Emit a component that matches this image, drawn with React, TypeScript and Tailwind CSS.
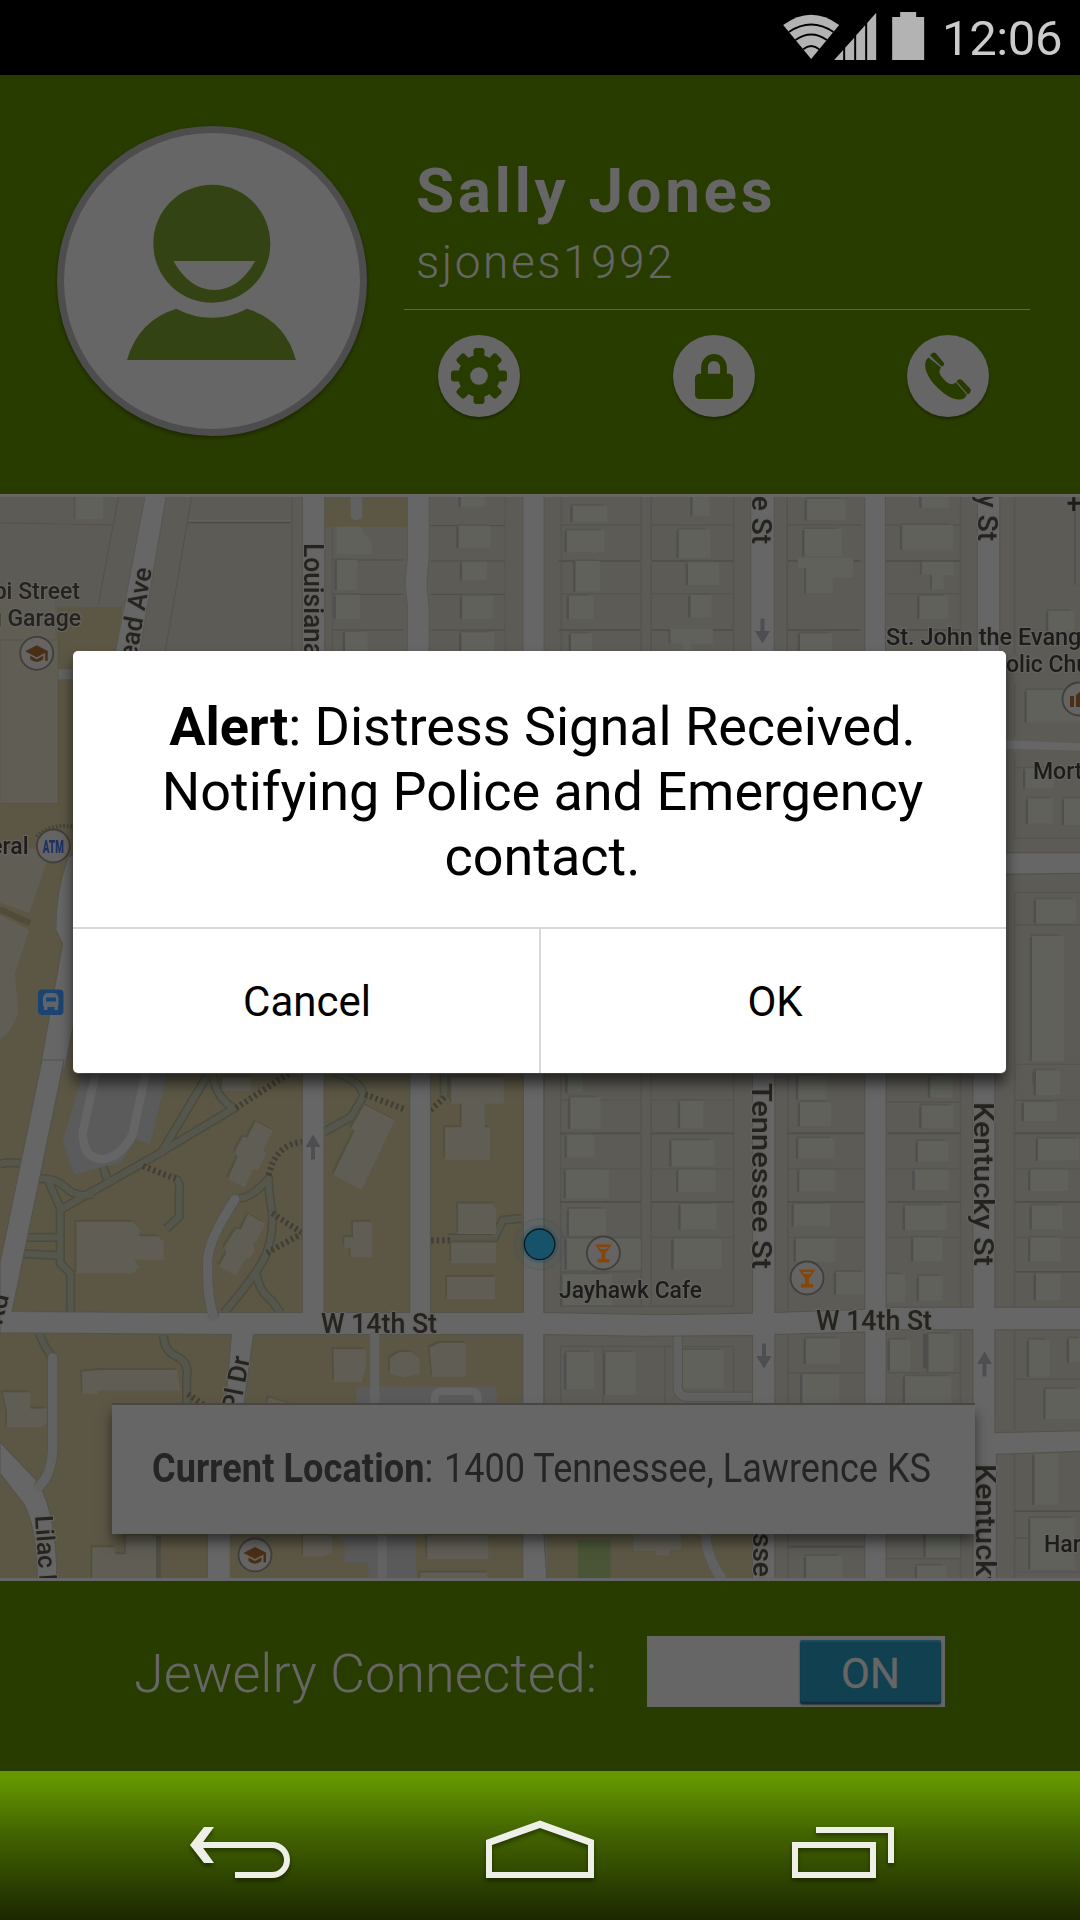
import React from "react";
import { FaLock } from "react-icons/fa";

type Box = [number, number, number, number];

const LAND = "#5d5b56";
const CAMPUS = "#5c5745";
const ROAD = "#666666";
const EDGE = "#54524b";
const HOUSE = "#5f615a";
const HALL = "#605d55";
const LOT = "#565450";

const FOOTPATHS = [
  "M605 40L465 275M618 40Q625 110 680 140L430 290L175 435M0 302Q25 295 60 300M110 345Q160 340 190 370T270 390M140 350L175 430V590L205 620V740M75 515H175M65 562L175 568M300 310L310 345M505 345Q525 345 520 390V455L483 490",
  "M695 402Q730 400 780 345Q780 390 790 440Q795 510 770 570Q740 630 650 735M745 620Q750 670 790 700L815 735M970 35Q1050 60 1055 105L1020 165L940 210M1290 35V110M1300 517H1435L1460 465L1515 460",
  "M115 795Q130 840 155 865M475 800Q475 845 515 862Q550 880 542 920V1000",
];

function Houses({ items }: { items: Box[] }) {
  return (
    <>
      {items.map(([x, y, w, h], i) => (
        <g key={i}>
          <rect x={x - 7} y={y + 3} width={8} height={h - 3} fill="#4f4f4e" />
          <rect x={x - 5} y={y - 5} width={w - 8} height={6} fill="#55544f" />
          <rect x={x} y={y} width={w} height={h} fill={HOUSE} />
        </g>
      ))}
    </>
  );
}

function Label({
  x,
  y,
  size = 24,
  length,
  rotate = 0,
  anchor = "start",
  color = "#252320",
  children,
}: {
  x: number;
  y: number;
  size?: number;
  length?: number;
  rotate?: number;
  anchor?: "start" | "end";
  color?: string;
  children: string;
}) {
  const placement = `translate(${x} ${y}) rotate(${rotate})`;
  return (
    <text
      transform={placement}
      fontSize={size}
      fontWeight={500}
      textAnchor={anchor}
      textLength={length}
      lengthAdjust="spacingAndGlyphs"
      fill={color}
      stroke="#64635f"
      strokeWidth={2.5}
      strokeLinejoin="round"
      paintOrder="stroke"
    >
      {children}
    </text>
  );
}

function Pin({ x, y, children }: { x: number; y: number; children: React.ReactNode }) {
  return (
    <g transform={`translate(${x} ${y})`}>
      <circle r={16.5} fill="#656462" stroke="#403f3b" strokeWidth={1.8} />
      {children}
    </g>
  );
}

function Cocktail() {
  return <path d="M-8.500 -8.500H8.500L2 0.500V6H6V9.500H-6V6H-2V0.500ZM-4.500 -6L-3 -4H3L4.500 -6Z" fill="#86460a" fillRule="evenodd" />;
}

function GradCap() {
  return (
    <g fill="#4a2f17">
      <path d="M-11.500 -2L0 -8L11.500 -2L0 4Z" />
      <path d="M-6.500 2.500L0 6L6.500 2.500V6Q0 11.500 -6.500 6Z" />
      <path d="M8.500 -2H11V7.500H8.500Z" />
    </g>
  );
}

function Arrow({ x, y, down = false }: { x: number; y: number; down?: boolean }) {
  return (
    <path
      transform={`translate(${x} ${y}) rotate(${down ? 180 : 0})`}
      d="M0 -12.5L7.5 0H2V12.5H-2V0H-7.5Z"
      fill="#4c4e52"
    />
  );
}

function MapNorthWest() {
  return (
    <g transform="translate(0 485) scale(0.34439 0.33333)">
      <path d="M165 365H355L335 520H165Z" fill={CAMPUS} />
      <path d="M0 345H160V520H0Z" fill={HALL} />
      <path d="M215 30V103M0 113L330 120M345 30L285 360M557 30L480 500M848 30V510" stroke={EDGE} strokeWidth={3} fill="none" />
      <path d="M548 113H845" stroke="#4b4a46" strokeWidth={4} />
      <path d="M548 106H845" stroke="#62605a" strokeWidth={5} />
      <rect x={222} y={30} width={78} height={73} fill={HOUSE} />
      <path d="M422 30H483L402 520H332Z" fill={ROAD} stroke={EDGE} strokeWidth={2} />
      <path d="M945 30H1182V127H945Z" fill={CAMPUS} />
      <path d="M1018 30H1052V92Q1050 105 1035 105Q1020 105 1018 92Z" fill="#616161" />
      <path d="M965 225H1170M965 328H1170M965 435H1170M1250 122H1467M1250 228H1467M1250 328H1467M1250 435H1467" stroke="#4f4e49" strokeWidth={3.5} />
      <path d="M965 127V510M1467 30V510" stroke={LOT} strokeWidth={3} />
      <Houses items={[[978, 225, 60, 90], [975, 330, 70, 72], [1002, 440, 66, 80], [1338, 30, 72, 35], [1332, 122, 93, 66], [1342, 230, 72, 56], [1342, 332, 90, 70], [1340, 442, 95, 80]]} />
      <path d="M978 125H1050V138L1080 170V208H978Z" fill={HOUSE} />
      <rect x={879} y={30} width={63} height={500} fill={ROAD} />
      <path d="M1183 30H1246V210L1239 295L1246 370V520H1183V360L1176 295L1183 220Z" fill={ROAD} stroke={EDGE} strokeWidth={2} />
      <path d="M878 30V510M943 30V510M1519 30V510" stroke={EDGE} strokeWidth={2.5} />
      <rect x={1520} y={30} width={60} height={500} fill={ROAD} />
    </g>
  );
}

function MapNorthEast() {
  return (
    <g transform="translate(540 485) scale(0.34439 0.33333)">
      <path d="M60 120H293M325 120H560M718 120H935M1003 120H1220M60 326H293M325 326H560M1003 326H1220" stroke={LOT} strokeWidth={4} />
      <path d="M55 228H293M325 228H560M718 228H930M1003 228H1220M55 435H293M325 435H560M718 435H930M1003 435H1220" stroke="#4e4d49" strokeWidth={4} />
      <path d="M62 30V510M294 30V510M323 30V510M562 30V510M718 30V510M1221 30V510M1378 30V510" stroke={LOT} strokeWidth={4} />
      <Houses items={[[95, 62, 100, 48], [78, 136, 110, 66], [103, 228, 72, 92], [84, 332, 72, 70], [90, 445, 62, 70], [443, 30, 50, 62], [403, 133, 92, 86], [430, 232, 90, 68], [437, 330, 62, 68], [775, 42, 112, 64], [768, 132, 108, 82], [755, 445, 94, 70], [1108, 30, 80, 38], [1052, 120, 148, 74], [1102, 332, 84, 70], [1476, 378, 76, 60]]} />
      <path d="M748 218H910V278H850V325H770V248H748ZM1108 230H1202V270H1172V312H1137V268H1108ZM376 432H502V478H440V510H415V475H376Z" fill={HOUSE} />
      <path d="M770 250V325M1106 232V268M1135 270V312M376 435V475" stroke="#51514f" strokeWidth={6} />
      <path d="M612 20H680V520H612ZM943 20H1003V520H943ZM1270 20H1335V520H1270Z" fill={ROAD} stroke={EDGE} strokeWidth={2.5} />
      <rect x={-5} y={20} width={16} height={510} fill={ROAD} />
      <path d="M12 20V520" stroke={EDGE} strokeWidth={2.5} />
      <path d="M1553 80V300" stroke="#4f5054" strokeWidth={5} />
      <path d="M1532 55H1568M1550 37V78" stroke="#1d1b1b" strokeWidth={9} />
    </g>
  );
}

function MapWest() {
  return (
    <g transform="translate(0 640) scale(0.33333)">
      <rect x={0} y={0} width={280} height={1320} fill={CAMPUS} />
      <path d="M0 0H175V490H0Z" fill={HALL} stroke="#55523f" strokeWidth={2} />
      <path d="M175 88H280V118H175Z" fill="#626262" />
      <path d="M0 625H155L88 818L0 788Z" fill={HALL} />
      <path d="M0 825L88 870L45 1000L55 1120L30 1170L0 1200Z" fill={HALL} />
      <path d="M0 808L90 850" stroke="#504c39" strokeWidth={18} />
      <path d="M205 650Q165 760 168 870L188 912L112 1330H185L235 1080V640Z" fill={ROAD} stroke={EDGE} strokeWidth={3} />
      <path d="M110 590Q150 550 220 560" stroke="#45433a" strokeWidth={12} strokeDasharray="5 6" fill="none" />
    </g>
  );
}

function MapEast() {
  return (
    <g transform="translate(1000 640) scale(0.33333)">
      <path d="M0 300L250 310V332L0 326Z" fill={ROAD} />
      <path d="M44 130V290M44 340V595H250M44 383H90M44 757V1320M44 757H250M44 855H250M44 1273H250" stroke={LOT} strokeWidth={4} fill="none" />
      <path d="M0 638H250V700L0 703Z" fill={ROAD} stroke={EDGE} strokeWidth={4} />
      <Houses items={[[80, 150, 180, 98], [76, 385, 85, 60], [84, 475, 76, 76], [192, 475, 60, 80], [108, 778, 120, 72], [96, 888, 96, 375], [104, 1292, 76, 40]]} />
    </g>
  );
}

function MapSouthWest() {
  return (
    <g transform="translate(0 1060) scale(0.34439)">
      <rect x={0} y={20} width={1520} height={1490} fill={CAMPUS} />
      <path d="M245 20H490L435 245L395 230L350 300L215 332L182 235Z" fill="#5b5b5b" />
      <path d="M280 30L240 210Q240 285 295 288Q350 285 385 215L425 30" fill="none" stroke="#656565" strokeWidth={25} />
      <g fill="none" stroke="#4d4b3e" strokeWidth={27} strokeLinejoin="round">
        {FOOTPATHS.map((d) => <path key={d} d={d} />)}
      </g>
      <g fill="none" stroke="#56574c" strokeWidth={18} strokeLinejoin="round">
        {FOOTPATHS.map((d) => <path key={d} d={d} />)}
      </g>
      <g fill="none" stroke="#403e36" strokeWidth={18} strokeDasharray="7 9">
        <path d="M685 140L840 38M780 335Q800 245 878 238M415 308L510 345M790 445L875 500M775 560L875 505M1060 100L1180 145M1250 145L1295 105M1252 524H1310M545 970L590 1000" />
      </g>
      <g fill={HALL} className="drop-shadow-[-5px_-6px_0_#524f3f]">
        <path d="M222 470H385L405 490V512H460L475 528V580H390L405 600L385 620H222Z" />
        <path d="M742 178L792 205L765 262L775 270L748 320L735 318L710 370L662 345L690 280L680 270L705 222L718 225Z" />
        <path d="M720 447L770 475L745 525L735 530L740 555L725 575L710 580L685 627L636 598L658 560L650 545L685 490L700 492Z" />
        <path d="M1058 130L1147 175L1050 377L967 333L1030 205L1018 200Z" />
        <path d="M1025 470H1080V573H1018V545H1000V515H1025ZM1310 50H1463V127H1408V195H1423V290H1292V195H1340V127H1310ZM1330 417H1430L1440 430V505H1330ZM1310 530H1440V590H1310ZM1298 630H1438V695H1298Z" />
        <path d="M968 840H1062V895L1050 935H970ZM1132 865L1160 848H1195L1218 865V910L1175 922L1132 910ZM1248 835L1275 822H1352V920H1255ZM238 905L290 900H515V920L525 960H283V970H240Z" />
        <path d="M8 965H88V1012H135V1055L118 1067H20V1020ZM268 1415H335V1435H365V1380H460V1510H268ZM880 1380H965V1430L940 1442H880ZM1240 1380H1418V1450H1240ZM1220 1488H1415V1510H1220ZM780 980L850 1000H775ZM645 50H730V90H645Z" />
      </g>
      <path d="M460 1380V1510" stroke="#4e4e43" strokeWidth={14} />
      <path d="M1035 948H1442V1010H1035ZM985 1380H1208V1510H1070V1460H1000V1400Z" fill="#5a5a5a" />
      <path d="M1262 1005V985Q1262 962 1285 962H1365Q1388 962 1388 985V1005" fill="none" stroke="#656565" strokeWidth={22} />
      <g fill={ROAD} stroke={EDGE} strokeWidth={3}>
        <path d="M122 0H186L35 730L500 733H878V20H941V733H1190V20H1250V733H1520V20H1580V1510H1518V797H736L708 1000V1510H602V1380L655 1000L672 797L0 792V590Z" />
        <path d="M0 1110L110 1225Q165 1320 165 1510H108Q110 1370 70 1290L0 1200Z" />
      </g>
      <g fill="none" strokeLinecap="round">
        <path d="M682 405Q600 530 603 590Q600 680 620 740M153 865V1110Q155 1200 115 1235" stroke={EDGE} strokeWidth={32} />
        <path d="M682 405Q600 530 603 590Q600 680 620 745M153 865V1110Q155 1200 112 1240" stroke="#626262" strokeWidth={27} />
      </g>
      <path d="M1088 790V1000M1110 1380V1510" stroke="#626262" strokeWidth={27} />
      <path d="M667 1376H790V1510H667Z" fill={CAMPUS} />
    </g>
  );
}

function MapSouthEast() {
  return (
    <g transform="translate(540 1060) scale(0.34439)">
      <path d="M60 30V715H562V30M294 30V715M323 30V715M720 30V725M1221 30V715M1378 30V720M60 1000V832H562V1000M183 832V1000M362 832V1000M720 795V1000M1221 790V1000M1378 785V1075M1378 1145V1510M720 1376V1510M1221 1376V1510" stroke={LOT} strokeWidth={4} fill="none" />
      <path d="M60 117H293M323 117H562M1010 122H1221M1378 117H1568M60 317H293M323 317H562M720 317H940M1010 317H1221M1378 317H1568M60 515H293M323 515H562M720 515H940M1010 515H1221M1378 515H1568M60 615H293M720 908H940M1010 908H1221M1378 927H1568M1005 1448H1221M1378 1388H1568M1378 1487H1568" stroke={LOT} strokeWidth={4} />
      <path d="M60 213H293M323 213H562M720 213H940M1010 213H1221M1378 213H1568M60 412H293M323 412H562M720 412H940M1010 412H1221M1378 412H1568M1378 615H1568M1378 1310H1568M720 1413H940" stroke="#4e4d48" strokeWidth={4.5} />
      <Houses
        items={[
          [80, 40, 45, 55], [88, 108, 88, 92], [78, 217, 80, 66], [75, 318, 125, 84], [84, 432, 108, 78], [78, 518, 215, 90], [65, 622, 145, 90],
          [407, 118, 68, 80], [382, 233, 125, 75], [402, 318, 108, 66], [408, 418, 105, 74], [388, 518, 140, 90],
          [750, 45, 82, 70], [755, 122, 90, 70], [750, 227, 105, 60], [753, 318, 105, 64], [737, 418, 105, 65], [743, 518, 115, 68], [860, 615, 88, 66],
          [1133, 45, 65, 65], [1108, 132, 92, 66], [1097, 235, 90, 60], [1088, 318, 100, 60], [1060, 422, 120, 72], [1084, 515, 84, 70], [1003, 622, 58, 82], [1100, 627, 70, 72],
          [1440, 30, 70, 72], [1405, 122, 96, 56], [1446, 228, 120, 64], [1424, 318, 110, 62], [1428, 422, 90, 70], [1424, 515, 88, 70], [1440, 620, 72, 78],
          [77, 848, 80, 108], [190, 848, 88, 125], [414, 842, 120, 112], [772, 808, 100, 74], [762, 912, 108, 88],
          [1016, 812, 60, 90], [1128, 795, 74, 110], [1060, 918, 135, 82], [1420, 812, 60, 108], [1536, 808, 40, 70],
          [1468, 955, 100, 88], [1436, 1142, 70, 150], [1424, 1330, 130, 150], [773, 1440, 105, 70], [1120, 1376, 100, 68], [1095, 1468, 85, 42],
        ]}
      />
      <path d="M1118 795V895" stroke="#4d4d4c" strokeWidth={12} />
      <path d="M20 1376H617V1510H20Z" fill={CAMPUS} />
      <path d="M110 1395H205V1510H110Z" fill="#4a5537" />
      <path d="M272 1376H410V1422H375V1438H335V1425H272Z" fill={HALL} />
      <path d="M482 1376Q480 1440 530 1510" fill="none" stroke="#616161" strokeWidth={28} />
      <path d="M400 790V950Q402 978 430 978H620" fill="none" stroke={EDGE} strokeWidth={29} />
      <path d="M400 790V950Q402 978 430 978H620" fill="none" stroke="#616161" strokeWidth={24} />
      <path
        d="M0 20H11V733L350 740L617 735V20H682V733L943 724V20H1005V718H1257V20H1321V718H1580V783H1321V1082L1580 1076V1136L1325 1145V1510H1257V783H1005V1510H943V790L682 797V1510H617V800L300 802L11 797V1376L20 1510H0Z"
        fill={ROAD}
        stroke={EDGE}
        strokeWidth={3}
      />
    </g>
  );
}

function CityMap() {
  return (
    <svg viewBox="0 497 1080 1081" className="block h-[1081px] w-full blur-[0.6px]" fontFamily="Roboto, sans-serif">
      <rect x={0} y={497} width={1080} height={1081} fill={LAND} />
      <MapNorthWest />
      <MapNorthEast />
      <MapWest />
      <MapEast />
      <MapSouthWest />
      <MapSouthEast />
      <rect x={525} y={1060} width={18} height={520} fill={ROAD} />

      <Arrow x={762.5} y={631} down />
      <Arrow x={313} y={1147} />
      <Arrow x={764} y={1356} down />
      <Arrow x={984.5} y={1364} />

      <Label x={80} y={599} size={23} anchor="end">pi Street</Label>
      <Label x={81} y={626} size={23} anchor="end">g Garage</Label>
      <Label x={152} y={569} size={26} rotate={-80} anchor="end">ead Ave</Label>
      <Label x={304} y={543} size={28} length={114} rotate={90}>Louisiana</Label>
      <Label x={752} y={544} size={28} rotate={90} anchor="end">e St</Label>
      <Label x={978} y={541} size={28} rotate={90} anchor="end">y St</Label>
      <Label x={886} y={645} size={23} length={208} color="#1d1c1b">St. John the Evange</Label>
      <Label x={1006} y={672} size={23} color="#1d1c1b">olic Church</Label>
      <Label x={1033} y={779} size={23} color="#1d1c1b">Mort</Label>
      <Label x={28.5} y={854} size={23} anchor="end" color="#1d1c1b">eral</Label>
      <Label x={752} y={1083} size={28} length={186} rotate={90}>Tennessee St</Label>
      <Label x={974} y={1102} size={28} length={164} rotate={90}>Kentucky St</Label>
      <Label x={976} y={1464} size={28} length={164} rotate={90}>Kentucky St</Label>
      <Label x={752.5} y={1533} size={28} rotate={90}>ssee</Label>
      <Label x={321} y={1332.5} size={27} length={116}>W 14th St</Label>
      <Label x={816} y={1329.5} size={27} length={116}>W 14th St</Label>
      <Label x={559} y={1297.5} size={23} length={143} color="#1d1c1b">Jayhawk Cafe</Label>
      <Label x={250} y={1358} size={26} rotate={-79} anchor="end">Pl Dr</Label>
      <Label x={35} y={1516} size={25} rotate={86}>Lilac Ln</Label>
      <Label x={9} y={1296} size={26} rotate={-76} anchor="end">Rd</Label>
      <Label x={1044} y={1552} size={23} color="#1d1c1b">Harr</Label>

      <Pin x={36.7} y={653.3}><GradCap /></Pin>
      <Pin x={255} y={1555}><GradCap /></Pin>
      <Pin x={603.4} y={1253}><Cocktail /></Pin>
      <Pin x={807} y={1278}><Cocktail /></Pin>
      <Pin x={1079} y={699}>
        <path d="M-9 -3H-5V8H-9ZM-3 -4L3 -9V8H-3Z" fill="#4a2f17" />
      </Pin>
      <Pin x={53.3} y={846}>
        <text x={-10.5} y={7} fontSize={19} fontWeight={900} textLength={21} lengthAdjust="spacingAndGlyphs" fill="#1c3161">ATM</text>
      </Pin>
      <rect x={38} y={989.5} width={25.5} height={25.5} rx={4} fill="#1c4470" />
      <path d="M47 993H54.500Q58 994 58.500 998V1006H58V1010H54.500V1007H47.500V1010H44V1006H43V998Q43.500 994 47 993ZM46 997.500V1001.500H56V997.500Z" fill="#5c656d" fillRule="evenodd" />

      <circle cx={539.6} cy={1244.3} r={25.5} fill="#16536a" fillOpacity={0.06} stroke="#3d4d52" strokeOpacity={0.3} />
      <circle cx={539.6} cy={1244.3} r={19} fill="#16536a" fillOpacity={0.3} />
      <circle cx={539.6} cy={1244.3} r={15.3} fill="#16526a" stroke="#0d171b" strokeWidth={1.3} />
    </svg>
  );
}

function StatusBar() {
  return (
    <div className="flex h-[75px] w-full items-start justify-end bg-black pr-[18px]">
      <svg viewBox="240 0 440 225" className="h-[75px] w-[147px]" fill="#b3b3b3">
        <path d="M249 75Q333 14 417 75L333 177Z" />
        <path d="M266 96Q333 51 400 96M286 120Q333 87 380 120M309 148Q333 128 357 148" fill="none" stroke="#000" strokeWidth={6} />
        <path d="M402 180L429 150V180ZM435 180V143L462 113V180ZM468 180V106L495 76V180ZM501 180V69L528 38V180Z" />
        <path d="M576 51H600V36H648V51H672V180H576Z" />
      </svg>
      <span className="ml-[15px] w-[120px] pt-[10px] text-[49px] leading-[57px] tracking-[-0.4px] text-[#cbcbcb]">12:06</span>
    </div>
  );
}

function Avatar() {
  return (
    <div className="size-[310px] shrink-0 rounded-full border-[7px] border-[#4d4d4d] bg-[#666666] shadow-[0_2px_4px_rgba(0,0,0,0.35)]">
      <svg viewBox="72 68 888 888" className="size-full" fill="#344314">
        <path fillRule="evenodd" d="M516 223C418 223 340 302 340 400S418 577 516 577S691 498 691 400S613 223 516 223ZM400 452H646Q596 539 523 539Q450 539 400 452Z" />
        <path d="M409 595Q460 622 515 622T621 595Q735 630 768 749H261Q295 630 409 595Z" />
      </svg>
    </div>
  );
}

function RoundButton({ children }: { children: React.ReactNode }) {
  return (
    <button className="flex size-[82px] items-center justify-center rounded-full bg-[#666666] text-[#293c00] shadow-[0_2px_3px_rgba(0,0,0,0.35)]">
      {children}
    </button>
  );
}

function Gear() {
  return (
    <svg viewBox="-28 -28 56 56" className="size-14" fill="#293c00">
      {[0, 45, 90, 135].map((a) => (
        <rect key={a} x={-5.5} y={-28} width={11} height={56} rx={3} transform={`rotate(${a})`} />
      ))}
      <circle r={21} />
      <circle r={8.800} fill="#666666" />
    </svg>
  );
}

function Handset() {
  return (
    <svg viewBox="0 0 48 48" className="size-12" fill="#293c00">
      <path d="M4.500 5.500C-1 10 0 20 10 32C21 44 32 50 40 46.500L43 43L32 30.500L29 32C25 34 14 23 15.500 18.500L17 15.500Z" />
      <path d="M6 3.500Q9 -1 12 1.500L20 11Q21 14 17.500 14.500ZM32.500 29.500Q35 26 38 28L46.500 37Q48 40 44 42.500Z" />
    </svg>
  );
}

function ProfileHeader() {
  return (
    <header className="flex h-[419px] w-full bg-[#293c00] pt-[51px] pl-[57px]">
      <Avatar />
      <div className="ml-[37px] w-[626px]">
        <div className="h-[184px] border-b border-[#5f625c] pl-[12px] text-[#666666]">
          <h1 className="pt-[29px] text-[62px] leading-[72px] font-bold tracking-[3.6px] whitespace-nowrap">Sally Jones</h1>
          <p className="pt-[2px] text-[46px] leading-[66px] font-light tracking-[2.5px]">sjones1992</p>
        </div>
        <div className="flex justify-between pt-[25px] pr-[41px] pl-[34px]">
          <RoundButton><Gear /></RoundButton>
          <RoundButton><FaLock className="h-[45px] w-[38px]" preserveAspectRatio="none" /></RoundButton>
          <RoundButton><Handset /></RoundButton>
        </div>
      </div>
    </header>
  );
}

function ConnectionBar() {
  return (
    <section className="flex h-[190px] w-full items-start bg-[#293c00] pl-[134px] text-[#666666]">
      <span className="w-[513px] pt-[61px] text-[54px] leading-[64px] font-light whitespace-nowrap">Jewelry Connected:</span>
      <div className="mt-[55px] flex h-[71px] w-[298px] justify-end bg-[#666666] pt-1 pr-1">
        <div className="flex h-[64px] w-[141px] items-center justify-center rounded-[3px] bg-[#114050] pt-[3px] text-[42px] leading-none shadow-[inset_0_2px_1px_#1d4c5b,inset_0_-2px_1px_#0d303c,0_1px_2px_rgba(0,0,0,0.5)] [-webkit-text-stroke:0.4px_#666666]">ON</div>
      </div>
    </section>
  );
}

function NavigationBar() {
  return (
    <nav className="h-[149px] w-full bg-[linear-gradient(#669900_0%,#649600_6%,#436400_42%,#1b2700_100%)]">
      <svg viewBox="0 1771 1080 149" className="size-full drop-shadow-[0_3px_2px_rgba(0,0,0,0.4)]" fill="#eef0e8">
        <path d="M190 1845L204 1827H214L201 1845L214 1863H204Z" />
        <path d="M196 1845H272A15 15 0 0 1 272 1875H235" fill="none" stroke="#eef0e8" strokeWidth={6} />
        <path fillRule="evenodd" d="M486 1840L540 1820.500L594 1840V1878H486ZM492 1845V1872H588V1845L540 1828Z" />
        <path d="M795 1845H873V1875H795ZM816 1830H891V1863" fill="none" stroke="#eef0e8" strokeWidth={6} />
      </svg>
    </nav>
  );
}

function AlertDialog() {
  return (
    <div role="alertdialog" className="absolute top-[651px] left-[73px] flex h-[422px] w-[933px] flex-col overflow-visible rounded-[5px] bg-white text-black shadow-[0_10px_14px_rgba(0,0,0,0.6),0_1px_0_#8a8a8a]">
      <p className="h-[276px] pt-[43px] pl-[6px] text-center text-[54px] leading-[65px] tracking-[-0.03px] whitespace-nowrap">
        <b>Alert</b>: Distress Signal Received.
        <br />
        Notifying Police and Emergency
        <br />
        contact.
      </p>
      <div className="flex grow border-t-2 border-[#d9d9d9] text-[42px]">
        <button className="w-[468px] border-r-2 border-[#d9d9d9] pt-px pl-[2px]">Cancel</button>
        <button className="grow pt-px pl-[3px]">OK</button>
      </div>
    </div>
  );
}

export default function App() {
  return (
    <div className="relative flex h-[1920px] w-[1080px] flex-col overflow-hidden bg-black font-[Roboto,sans-serif]">
      <StatusBar />
      <ProfileHeader />
      <main className="relative h-[1087px] w-full overflow-hidden border-y-[3px] border-[#666666]">
        <CityMap />
        <div className="absolute top-[908px] left-[112px] flex h-[129px] w-[863px] items-center bg-[#666666] pb-[2px] pl-[40px] text-[#252525] shadow-[0_-2px_0_#474641,0_8px_12px_rgba(0,0,0,0.5)]">
          <p className="origin-left scale-x-[0.88] text-[41px] whitespace-nowrap">
            <b className="tracking-[0.1px]">Current Location</b>: <span className="ml-[2px]">1400 Tennessee, Lawrence KS</span>
          </p>
        </div>
      </main>
      <ConnectionBar />
      <NavigationBar />
      <AlertDialog />
    </div>
  );
}
